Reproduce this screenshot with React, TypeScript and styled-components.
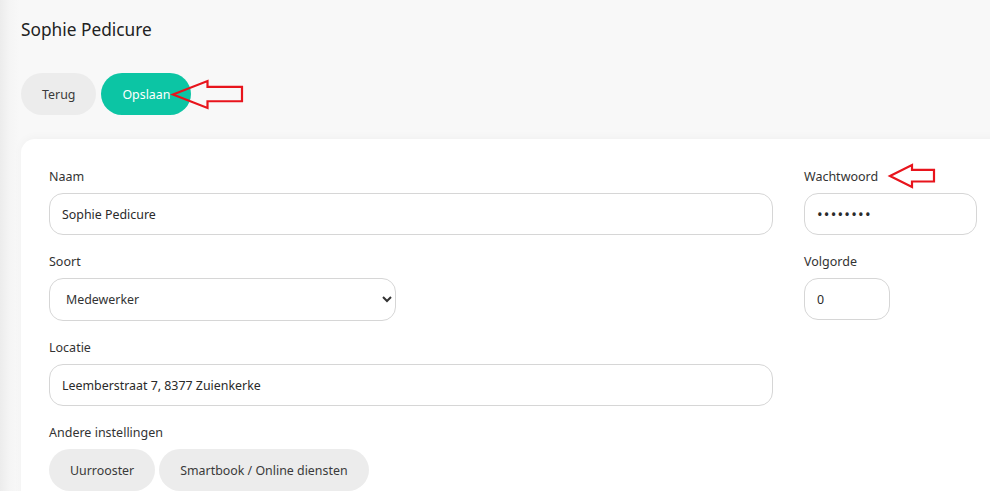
import React from 'react';
import styled, { createGlobalStyle } from 'styled-components';

const GlobalStyle = createGlobalStyle`
  html, body {
    margin: 0;
    padding: 0;
    background: #f8f8f8;
    font-family: "Noto Sans", "Open Sans", sans-serif;
    color: #333;
  }
  * { box-sizing: border-box; }
`;

const Page = styled.div`
  position: relative;
  width: 990px;
  height: 491px;
  overflow: hidden;
  padding: 0 0 0 21px;
  background: linear-gradient(to right, #ececec 0, #f5f5f5 10px, #f8f8f8 20px);
`;

const Title = styled.h1`
  margin: 0;
  padding-top: 18px;
  font-size: 17.3px;
  font-weight: 400;
  line-height: 24px;
  color: #222;
`;

const Actions = styled.div`
  position: relative;
  display: flex;
  gap: 5px;
  margin-top: 31px;
`;

const PillButton = styled.button<{ primary?: boolean }>`
  height: 42px;
  padding: 0 21px;
  border: none;
  border-radius: 21px;
  background: ${({ primary }) => (primary ? '#0cc5a4' : '#ececec')};
  color: ${({ primary }) => (primary ? '#ffffff' : '#3a3a3a')};
  font-family: inherit;
  font-size: 12.4px;
  cursor: pointer;
`;

const Card = styled.div`
  margin-top: 24px;
  margin-right: -30px;
  height: 400px;
  padding: 29px 0 0 28px;
  background: #fff;
  border-radius: 14px;
  box-shadow: 0 -2px 8px rgba(0, 0, 0, 0.03);
`;

const Grid = styled.div`
  display: grid;
  grid-template-columns: 724px 173px;
  column-gap: 31px;
  align-items: start;
`;

const Column = styled.div`
  display: flex;
  flex-direction: column;
  gap: 18px;
`;

const Field = styled.div<{ width?: number }>`
  display: flex;
  flex-direction: column;
  gap: 8px;
  width: ${({ width }) => (width ? `${width}px` : '100%')};
`;

const LabelRow = styled.div`
  position: relative;
  display: flex;
  align-items: center;
`;

const Label = styled.label`
  font-size: 12.5px;
  line-height: 17px;
  color: #333;
`;

const Input = styled.input<{ secret?: boolean }>`
  width: 100%;
  height: 42px;
  padding: 0 12px;
  border: 1px solid #d6d6d6;
  border-radius: 14px;
  background: #fff;
  font-family: inherit;
  font-size: ${({ secret }) => (secret ? '15px' : '12.4px')};
  letter-spacing: ${({ secret }) => (secret ? '1.2px' : 'normal')};
  color: #2a2a2a;
  outline: none;
`;

const Select = styled.select`
  width: 100%;
  height: 43px;
  padding: 0 10px 0 12px;
  border: 1px solid #d6d6d6;
  border-radius: 14px;
  background: #fff;
  font-family: inherit;
  font-size: 12.4px;
  color: #333;
  outline: none;
`;

const ButtonRow = styled.div`
  display: flex;
  gap: 4px;
`;

const AnnotationArrow = styled.svg<{ left: number; top: number }>`
  position: absolute;
  left: ${({ left }) => left}px;
  top: ${({ top }) => top}px;
  overflow: visible;
`;

const Arrow: React.FC<{ left: number; top: number; w: number; h: number }> = ({ left, top, w, h }) => {
  const head = w * 0.5;
  const shaftTop = h * 0.22;
  const shaftBottom = h * 0.75;
  return (
    <AnnotationArrow left={left} top={top} width={w} height={h} viewBox={`0 0 ${w} ${h}`}>
      <polygon
        points={`0,${h / 2} ${head},0 ${head},${shaftTop} ${w},${shaftTop} ${w},${shaftBottom} ${head},${shaftBottom} ${head},${h}`}
        fill="none"
        stroke="#e8141c"
        strokeWidth={2.2}
        strokeLinejoin="miter"
      />
    </AnnotationArrow>
  );
};

const App: React.FC = () => {
  return (
    <>
      <GlobalStyle />
      <Page>
        <Title>Sophie Pedicure</Title>
        <Actions>
          <PillButton>Terug</PillButton>
          <PillButton primary>Opslaan</PillButton>
          <Arrow left={152} top={8} w={69} h={27} />
        </Actions>
        <Card>
          <Grid>
            <Column>
              <Field>
                <Label>Naam</Label>
                <Input defaultValue="Sophie Pedicure" />
              </Field>
              <Field width={347}>
                <Label>Soort</Label>
                <Select defaultValue="Medewerker">
                  <option>Medewerker</option>
                  <option>Beheerder</option>
                </Select>
              </Field>
              <Field>
                <Label>Locatie</Label>
                <Input defaultValue="Leemberstraat 7, 8377 Zuienkerke" />
              </Field>
              <Field>
                <Label>Andere instellingen</Label>
                <ButtonRow>
                  <PillButton>Uurrooster</PillButton>
                  <PillButton>Smartbook / Online diensten</PillButton>
                </ButtonRow>
              </Field>
            </Column>
            <Column>
              <Field>
                <LabelRow>
                  <Label>Wachtwoord</Label>
                  <Arrow left={86} top={-3} w={44} h={22} />
                </LabelRow>
                <Input secret type="password" defaultValue="geheim12" />
              </Field>
              <Field width={86}>
                <Label>Volgorde</Label>
                <Input defaultValue="0" />
              </Field>
            </Column>
          </Grid>
        </Card>
      </Page>
    </>
  );
};

export default App;
